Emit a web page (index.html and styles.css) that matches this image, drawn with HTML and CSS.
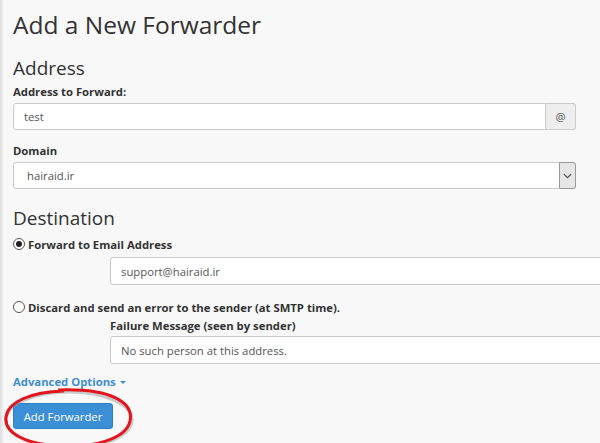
FILE: index.html
```html
<!DOCTYPE html>
<html lang="en">
<head>
    <meta charset="UTF-8">
    <title>Add a New Forwarder</title>
    <link rel="stylesheet" href="styles.css">
</head>
<body>

<div class="page">
    <h1>Add a New Forwarder</h1>

    <h2>Address</h2>
    <div class="form-group">
        <label for="email">Address to Forward:</label>
        <div class="input-group">
            <input type="text" id="email" value="test">
            <span class="addon">@</span>
        </div>
    </div>
    <div class="form-group">
        <label for="domain">Domain</label>
        <div class="select-box">
            <span class="select-value">hairaid.ir</span>
            <span class="select-arrow">
                <svg width="9" height="6" viewBox="0 0 9 6"><path d="M1 1.2 L4.5 4.6 L8 1.2" fill="none" stroke="#555" stroke-width="1.2"/></svg>
            </span>
        </div>
    </div>

    <h2 class="dest">Destination</h2>
    <div class="radio-row">
        <span class="radio checked"></span>
        <span class="radio-label">Forward to Email Address</span>
    </div>
    <div class="indent">
        <input type="text" class="wide" value="support@hairaid.ir">
    </div>

    <div class="radio-row second">
        <span class="radio"></span>
        <span class="radio-label">Discard and send an error to the sender (at SMTP time).</span>
    </div>
    <div class="indent">
        <label class="sub-label">Failure Message (seen by sender)</label>
        <input type="text" class="wide" value="No such person at this address.">
    </div>

    <a class="advanced" href="#">Advanced Options <span class="caret"></span></a>

    <div class="actions">
        <button type="button">Add Forwarder</button>
        <svg class="circle-mark" width="140" height="70" viewBox="0 0 140 70">
            <ellipse cx="69" cy="38" rx="63" ry="28" fill="none" stroke="#999" stroke-width="3" opacity="0.5"/>
            <path d="M58 8 C 110 6, 134 20, 130 39 C 126 58, 90 66, 60 64 C 25 62, 4 51, 6 35 C 8 20, 30 10, 64 9" fill="none" stroke="#e3141b" stroke-width="3"/>
        </svg>
    </div>
</div>

</body>
</html>
```

FILE: styles.css
```css
body {
    margin: 0;
    padding: 0;
    background-color: #f8f8f8;
    font-family: "Open Sans", Arial, sans-serif;
    color: #333;
}
.page {
    padding: 7px 0 0 13px;
    min-height: 443px;
    box-sizing: border-box;
    box-shadow: inset 4px 0 3px -2px #dcdcdc;
    overflow: hidden;
}
h1 {
    font-size: 24.5px;
    font-weight: 400;
    margin: 0 0 12px;
    line-height: 36px;
}
h2 {
    font-size: 19px;
    font-weight: 400;
    margin: 0 0 3px;
    line-height: 26px;
}
h2.dest {
    margin-top: 16px;
}
.form-group {
    margin-bottom: 13px;
}
label {
    display: block;
    font-size: 11.3px;
    font-weight: 700;
    margin-bottom: 3px;
    line-height: 16px;
}
input {
    font-family: "Open Sans", Arial, sans-serif;
    font-size: 11.3px;
    color: #555;
    height: 27px;
    padding: 0 10px;
    border: 1px solid #ccc;
    border-radius: 3px;
    background: #fff;
    box-sizing: border-box;
}
.input-group {
    display: flex;
    width: 563px;
}
.input-group input {
    flex: 1;
    border-radius: 3px 0 0 3px;
}
.addon {
    width: 30px;
    height: 27px;
    box-sizing: border-box;
    border: 1px solid #ccc;
    border-left: none;
    border-radius: 0 3px 3px 0;
    background: #eee;
    font-size: 11.3px;
    color: #555;
    display: flex;
    align-items: center;
    justify-content: center;
}
.select-box {
    display: flex;
    width: 563px;
    height: 27px;
    border: 1px solid #ccc;
    border-radius: 3px;
    background: #fff;
    box-sizing: border-box;
}
.select-value {
    flex: 1;
    font-size: 11.3px;
    color: #555;
    padding-left: 13px;
    line-height: 25px;
}
.select-arrow {
    width: 15px;
    border: 1px solid #999;
    background: #e6e6e6;
    margin: -1px -1px -1px 0;
    border-radius: 0 3px 3px 0;
    display: flex;
    align-items: center;
    justify-content: center;
}
.radio-row {
    display: flex;
    align-items: center;
    gap: 3px;
    margin-top: 5px;
    height: 16px;
}
.radio-row.second {
    margin-top: 14px;
}
.radio {
    position: relative;
    box-sizing: border-box;
    width: 12px;
    height: 12px;
    border: 1px solid #555;
    border-radius: 50%;
    background: #fff;
}
.radio.checked::after {
    content: "";
    position: absolute;
    left: 2px;
    top: 2px;
    width: 6px;
    height: 6px;
    border-radius: 50%;
    background: #222;
}
.radio-label {
    font-size: 11.3px;
    font-weight: 700;
}
.indent {
    padding-left: 97px;
    margin-top: 5px;
}
.wide {
    width: 520px;
    height: 28px;
}
.sub-label {
    margin-bottom: 2px;
    margin-top: -2px;
}
.advanced {
    display: inline-block;
    margin-top: 10px;
    font-size: 11.3px;
    font-weight: 700;
    color: #3d8ed3;
    text-decoration: none;
    line-height: 16px;
}
.caret {
    display: inline-block;
    width: 0;
    height: 0;
    border-left: 3px solid transparent;
    border-right: 3px solid transparent;
    border-top: 3px solid #3d8ed3;
    vertical-align: middle;
    margin-left: 1px;
}
.actions {
    position: relative;
    margin-top: 12px;
}
button {
    font-family: "Open Sans", Arial, sans-serif;
    font-size: 11.3px;
    color: #fff;
    background-color: #3a8fd6;
    border: 1px solid #2f7fc4;
    border-radius: 3px;
    height: 26px;
    width: 100px;
    padding: 0;
}
.circle-mark {
    position: absolute;
    left: -13px;
    top: -21px;
    pointer-events: none;
}
```
